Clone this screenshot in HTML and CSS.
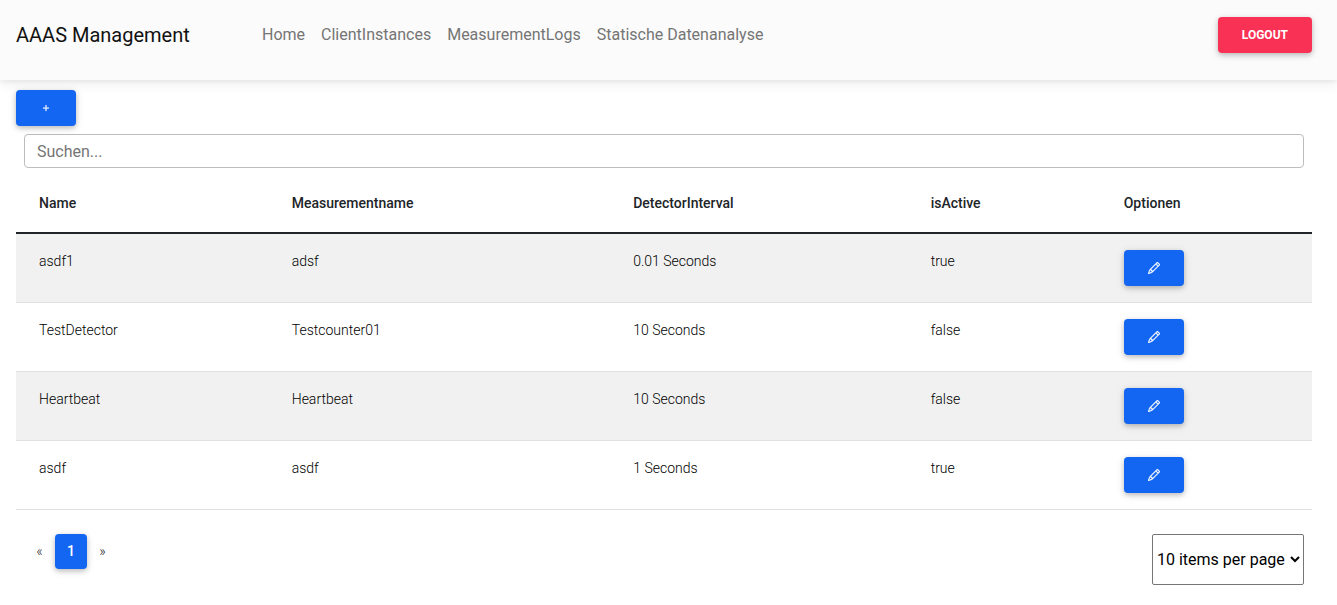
FILE: index.html
```html
<!DOCTYPE html>
<html lang="de">
<head>
<meta charset="utf-8">
<title>AAAS Management</title>
<link rel="stylesheet" href="styles.css">
</head>
<body>
<header class="navbar">
  <a class="brand" href="#">AAAS Management</a>
  <nav class="nav">
    <a href="#">Home</a>
    <a href="#">ClientInstances</a>
    <a href="#">MeasurementLogs</a>
    <a href="#">Statische Datenanalyse</a>
  </nav>
  <button class="btn btn-danger" type="button">LOGOUT</button>
</header>
<main class="content">
  <button class="btn btn-primary" type="button" aria-label="Add">
    <svg class="icon" viewBox="0 0 16 16"><path d="M8 4a.5.5 0 0 1 .5.5v3h3a.5.5 0 0 1 0 1h-3v3a.5.5 0 0 1-1 0v-3h-3a.5.5 0 0 1 0-1h3v-3A.5.5 0 0 1 8 4z"/></svg>
  </button>
  <div class="search"><input type="text" placeholder="Suchen..." aria-label="Suchen"></div>
  <table class="table">
    <colgroup><col class="c-name"><col class="c-measure"><col class="c-interval"><col class="c-active"><col class="c-options"></colgroup>
    <thead>
      <tr><th>Name</th><th>Measurementname</th><th>DetectorInterval</th><th>isActive</th><th>Optionen</th></tr>
    </thead>
    <tbody>
      <tr><td>asdf1</td><td>adsf</td><td>0.01 Seconds</td><td>true</td><td><button class="btn btn-primary" type="button" aria-label="Edit"><svg class="icon" viewBox="0 0 16 16"><use href="#pencil"/></svg></button></td></tr>
      <tr><td>TestDetector</td><td>Testcounter01</td><td>10 Seconds</td><td>false</td><td><button class="btn btn-primary" type="button" aria-label="Edit"><svg class="icon" viewBox="0 0 16 16"><use href="#pencil"/></svg></button></td></tr>
      <tr><td>Heartbeat</td><td>Heartbeat</td><td>10 Seconds</td><td>false</td><td><button class="btn btn-primary" type="button" aria-label="Edit"><svg class="icon" viewBox="0 0 16 16"><use href="#pencil"/></svg></button></td></tr>
      <tr><td>asdf</td><td>asdf</td><td>1 Seconds</td><td>true</td><td><button class="btn btn-primary" type="button" aria-label="Edit"><svg class="icon" viewBox="0 0 16 16"><use href="#pencil"/></svg></button></td></tr>
    </tbody>
  </table>
  <div class="footer">
    <nav class="pages" aria-label="Pagination">
      <a href="#">«</a>
      <a href="#" class="active" aria-current="page">1</a>
      <a href="#">»</a>
    </nav>
    <select class="page-size" aria-label="Items per page"><option>10 items per page</option></select>
  </div>
</main>
<svg width="0" height="0" class="defs" aria-hidden="true"><symbol id="pencil" viewBox="0 0 16 16"><path d="M12.146.146a.5.5 0 0 1 .708 0l3 3a.5.5 0 0 1 0 .708l-10 10a.5.5 0 0 1-.168.11l-5 2a.5.5 0 0 1-.65-.65l2-5a.5.5 0 0 1 .11-.168l10-10zM11.207 2.5 13.5 4.793 14.793 3.5 12.5 1.207 11.207 2.5zm1.586 3L10.5 3.207 4 9.707V10h.5a.5.5 0 0 1 .5.5v.5h.5a.5.5 0 0 1 .5.5v.5h.293l6.5-6.5zm-9.761 5.175-.106.106-1.528 3.821 3.821-1.528.106-.106A.5.5 0 0 1 5 12.500V12h-.5a.5.5 0 0 1-.5-.5V11h-.5a.5.5 0 0 1-.468-.325z"/></symbol></svg>
</body>
</html>
```
FILE: styles.css
```css
* { box-sizing: border-box; }
body {
  margin: 0;
  font-family: Roboto, sans-serif;
  font-size: 16px;
  line-height: 24px;
  color: #212529;
  background: #fff;
}
a { color: inherit; text-decoration: none; }
.navbar {
  display: flex;
  align-items: flex-start;
  padding: 17px 25px 27px 16px;
  background: #fbfbfb;
  box-shadow: 0 4px 12px rgba(0, 0, 0, 0.07), 0 2px 4px rgba(0, 0, 0, 0.05);
}
.brand {
  width: 246px;
  line-height: 36px;
  font-size: 20px;
  color: #111;
}
.nav {
  display: flex;
  flex: 1;
  gap: 16px;
  line-height: 35px;
  color: #757575;
}
.btn {
  display: inline-flex;
  align-items: center;
  justify-content: center;
  height: 36px;
  padding: 0 24px;
  border: 0;
  border-radius: 4px;
  font: 500 12px/18px Roboto, sans-serif;
  color: #fff;
  vertical-align: top;
  box-shadow: 0 2px 5px rgba(0, 0, 0, 0.2), 0 2px 10px rgba(0, 0, 0, 0.1);
}
.btn-primary { background: #1266f1; }
.btn-danger { background: #f93154; font-weight: 700; }
.icon {
  width: 12px;
  height: 12px;
  fill: currentColor;
  stroke: currentColor;
  stroke-width: 0.5;
}
.content { padding: 10px 25px 20px 16px; }
.search { padding: 8px; }
.search input {
  display: block;
  width: 100%;
  height: 34px;
  padding: 0 12px;
  border: 1px solid #bdbdbd;
  border-radius: 4px;
  font: 400 16px/24px Roboto, sans-serif;
}
.search input::placeholder { color: #757575; opacity: 1; }
.table {
  width: 100%;
  border-collapse: collapse;
  table-layout: fixed;
  font-size: 14px;
  line-height: 22px;
}
.c-name { width: 19.5%; }
.c-measure { width: 26.35%; }
.c-interval { width: 22.95%; }
.c-active { width: 14.9%; }
.table th {
  padding: 16px 23px 18px;
  font-weight: 500;
  text-align: left;
  border-bottom: 2px solid #212529;
}
.table td {
  padding: 16px 23px;
  font-weight: 300;
  color: #000;
  vertical-align: top;
  border-bottom: 1px solid #e0e0e0;
}
.table tbody tr:nth-child(odd) { background: #f1f1f1; }
.footer {
  display: flex;
  align-items: flex-start;
  justify-content: space-between;
  padding: 24px 8px 0;
}
.pages {
  display: flex;
  font-size: 14px;
  line-height: 35px;
}
.pages a {
  width: 31px;
  text-align: center;
  font-weight: 300;
}
.pages .active {
  width: 32px;
  border-radius: 4px;
  font-weight: 500;
  color: #fff;
  background: #1266f1;
  box-shadow: 0 2px 5px rgba(0, 0, 0, 0.2), 0 2px 10px rgba(0, 0, 0, 0.1);
}
.page-size {
  width: 152px;
  height: 51px;
  border: 1px solid #767676;
  border-radius: 2px;
  font: 400 16px/24px Roboto, sans-serif;
  color: #000;
  background: #fff;
}
.defs { position: absolute; }
```
